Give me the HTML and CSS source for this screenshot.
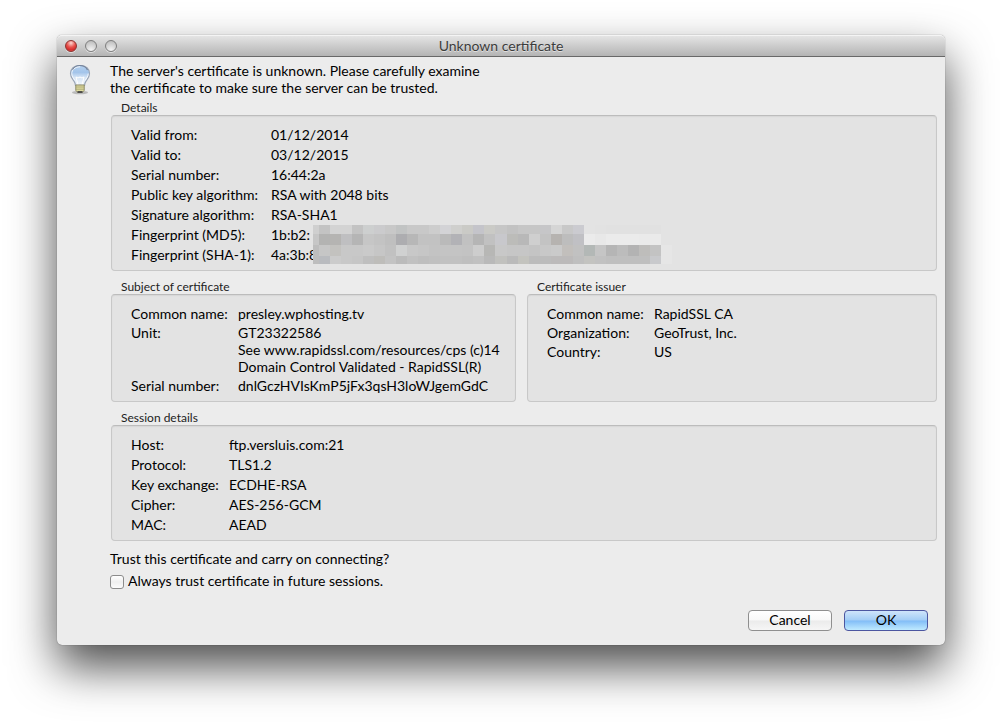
FILE: index.html
```html
<!DOCTYPE html>
<html lang="en">
<head>
<meta charset="utf-8">
<title>Unknown certificate</title>
<link rel="stylesheet" href="styles.css">
</head>
<body>
<main class="window">
  <header class="titlebar">
    <div class="lights">
      <button class="light light-close" type="button" aria-label="Close"></button>
      <button class="light" type="button" aria-label="Minimize"></button>
      <button class="light" type="button" aria-label="Zoom"></button>
    </div>
    <h1 class="title">Unknown certificate</h1>
  </header>
  <div class="body">
    <svg class="bulb" viewBox="0 0 24 32" aria-hidden="true">
      <defs>
        <linearGradient id="glass" x1="0" y1="0" x2="0" y2="1">
          <stop offset="0" stop-color="#b4d0ee"/>
          <stop offset="0.35" stop-color="#a3c4ea"/>
          <stop offset="0.6" stop-color="#d5e4f5"/>
          <stop offset="1" stop-color="#f3f7fb"/>
        </linearGradient>
      </defs>
      <ellipse cx="12" cy="29.500" rx="8" ry="1.800" fill="#888" opacity="0.5"/>
      <path d="M12 2.500C6 2.500 2.500 6 2.500 10.500c0 3.600 2 5.400 3.500 7.600 1 1.500 1.300 2.700 1.500 4.200h9c.2-1.500.5-2.700 1.500-4.200 1.500-2.200 3.500-4 3.500-7.600 0-4.500-3.500-8-9.500-8z" fill="url(#glass)" stroke="#9aa5b6" stroke-width="1.200"/>
      <path d="M4.500 7C6 4 8.500 2.500 12 2.500S18 4 19.500 7" fill="none" stroke="#75849c" stroke-width="1.200"/>
      <path d="M12 3.800c-5 0-8.200 3-8.200 6.800 0 3 1.600 4.600 3.200 7" fill="none" stroke="#fff" stroke-width="1" opacity="0.8"/>
      <path d="M20.200 10.600c0 3-1.600 4.600-3.200 7" fill="none" stroke="#fff" stroke-width="1" opacity="0.8"/>
      <path d="M8 14l2 8M16 14l-2 8M8 14l2 1 2-1 2 1 2-1" fill="none" stroke="#fff" stroke-width="1"/>
      <path d="M7.800 22h8.400v5.200c0 .8-1.400 2-2.400 2h-3.600c-1 0-2.400-1.200-2.400-2z" fill="#e0dda0" stroke="#8b8a66" stroke-width="1"/>
      <path d="M8 24h8M8 26.200h8" stroke="#a3a070" stroke-width="0.800"/>
      <path d="M9.500 29h5" stroke="#444" stroke-width="1.800"/>
    </svg>
    <div class="content">
      <p class="message">The server's certificate is unknown. Please carefully examine<br>the certificate to make sure the server can be trusted.</p>

      <section class="group">
        <h2 class="legend">Details</h2>
        <dl class="box fields fields-details">
          <dt>Valid from:</dt><dd>01/12/2014</dd>
          <dt>Valid to:</dt><dd>03/12/2015</dd>
          <dt>Serial number:</dt><dd>16:44:2a</dd>
          <dt>Public key algorithm:</dt><dd>RSA with 2048 bits</dd>
          <dt>Signature algorithm:</dt><dd>RSA-SHA1</dd>
          <dt>Fingerprint (MD5):</dt><dd class="masked">1b:b2:<svg class="mosaic" viewBox="0 0 359 39" shape-rendering="crispEdges" aria-hidden="true"></svg></dd>
          <dt>Fingerprint (SHA-1):</dt><dd>4a:3b:8</dd>
        </dl>
      </section>

      <div class="pair">
        <section class="group">
          <h2 class="legend">Subject of certificate</h2>
          <dl class="box fields fields-name">
            <dt>Common name:</dt><dd>presley.wphosting.tv</dd>
            <dt>Unit:</dt><dd>GT23322586<br>See www.rapidssl.com/resources/cps (c)14<br>Domain Control Validated - RapidSSL(R)</dd>
            <dt>Serial number:</dt><dd>dnlGczHVIsKmP5jFx3qsH3loWJgemGdC</dd>
          </dl>
        </section>
        <section class="group">
          <h2 class="legend">Certificate issuer</h2>
          <dl class="box fields fields-name">
            <dt>Common name:</dt><dd>RapidSSL CA</dd>
            <dt>Organization:</dt><dd>GeoTrust, Inc.</dd>
            <dt>Country:</dt><dd>US</dd>
          </dl>
        </section>
      </div>

      <section class="group">
        <h2 class="legend">Session details</h2>
        <dl class="box fields fields-session">
          <dt>Host:</dt><dd>ftp.versluis.com:21</dd>
          <dt>Protocol:</dt><dd>TLS1.2</dd>
          <dt>Key exchange:</dt><dd>ECDHE-RSA</dd>
          <dt>Cipher:</dt><dd>AES-256-GCM</dd>
          <dt>MAC:</dt><dd>AEAD</dd>
        </dl>
      </section>

      <p class="question">Trust this certificate and carry on connecting?</p>
      <div class="always">
        <input class="check" type="checkbox" id="always">
        <label for="always">Always trust certificate in future sessions.</label>
      </div>
      <div class="actions">
        <button class="btn" type="button">Cancel</button>
        <button class="btn btn-default" type="button">OK</button>
      </div>
    </div>
  </div>
</main>
<script src="mosaic.js"></script>
</body>
</html>
```
FILE: styles.css
```css
* { box-sizing: border-box; }
body {
  margin: 0;
  padding: 35px 57px 79px;
  background: #fff;
  color: #000;
  font: 14px/17px "Lucida Grande", Lato, "Noto Sans", sans-serif;
}
h1, h2, p, dl, dd { margin: 0; font-weight: normal; }
.window {
  border-radius: 5px;
  background: #ececec;
  box-shadow: 0 0 1px rgba(0, 0, 0, 0.6), 0 22px 46px rgba(0, 0, 0, 0.7);
}
.titlebar {
  display: grid;
  grid-template-columns: 1fr auto 1fr;
  align-items: center;
  height: 22px;
  padding: 0 8px;
  border-top: 1px solid #f4f4f4;
  border-bottom: 1px solid #686868;
  border-radius: 5px 5px 0 0;
  background: linear-gradient(#e4e4e4, #b4b4b4);
}
.lights { display: flex; gap: 8px; }
.light {
  width: 12px;
  height: 12px;
  padding: 0;
  border: 1px solid #7e7e7e;
  border-radius: 50%;
  background: radial-gradient(circle at 50% 90%, #f4f4f4, #cfcfcf 60%, #b4b4b4);
  box-shadow: 0 1px 0 rgba(255, 255, 255, 0.5);
}
.light-close {
  border-color: #8c3330;
  background: radial-gradient(circle at 50% 20%, #f9c9c4 5%, #e8534d 45%, #d42a2a 75%, #f58a80);
}
.title {
  padding-bottom: 2px;
  color: #3c3c3c;
  font-size: 14px;
  line-height: 17px;
  text-shadow: 0 1px 0 rgba(255, 255, 255, 0.5);
}
.body { display: flex; gap: 19px; padding: 5px 8px 14px 11px; }
.bulb { flex: none; width: 24px; height: 32px; margin-top: 1px; }
.content { flex: 1; min-width: 0; }
.message { margin: 0 0 4px -1px; }
.group + .pair, .pair + .group { margin-top: 8px; }
.legend {
  padding-left: 10px;
  color: #222;
  font-size: 12px;
  line-height: 15px;
}
.box {
  border: 1px solid #c8c8c8;
  border-top-color: #bcbcbc;
  border-radius: 4px;
  background: #e3e3e3;
  box-shadow: inset 0 1px 1px #d6d6d6;
  padding: 10px 8px 7px 19px;
}
.fields { display: grid; align-content: start; row-gap: 3px; }
.fields-details { grid-template-columns: 140px 1fr; }
.fields-name { grid-template-columns: 107px 1fr; row-gap: 2px; }
.fields-session { grid-template-columns: 98px 1fr; }
.fields dt, .fields dd { white-space: nowrap; }
.masked { position: relative; }
.mosaic { position: absolute; left: 42px; top: -1px; width: 359px; height: 39px; }
.pair { display: grid; grid-template-columns: 405fr 410fr; gap: 11px; }
.pair .group { display: flex; flex-direction: column; min-width: 0; }
.pair .box { flex: 1; }
.question { margin: 9px 0 6px -1px; }
.always { display: flex; align-items: center; gap: 4px; margin-left: -1px; }
.always label { padding-bottom: 1px; line-height: 16px; }
.check {
  appearance: none;
  width: 14px;
  height: 14px;
  margin: 0;
  border: 1px solid #8c8c8c;
  border-radius: 3px;
  background: linear-gradient(#fff, #efefef 50%, #fbfbfb);
}
.actions { display: flex; justify-content: flex-end; gap: 12px; margin-top: 20px; padding-right: 9px; }
.btn {
  width: 84px;
  height: 21px;
  padding: 0 0 2px;
  border: 1px solid #8f8f8f;
  border-radius: 4px;
  background: linear-gradient(#fff, #f8f8f8 48%, #ebebeb 52%, #f6f6f6);
  color: #000;
  font: inherit;
}
.btn-default {
  border-color: #4c56a0;
  background: linear-gradient(#cfe4fa, #a3cdf6 48%, #82bdf7 52%, #bfeaff);
}
```
FILE: mosaic.js
```js
const rows = [
  { y: 0, h: 9, shades: "cfcfcf c3c3c3 d3d3d3 d3d3d3 c3c3c3 cdcfcf cbcbcd c8c8c8 c1c3c3 c8c8c8 c8c8c8 cdcdcd d3d3d6 cfcfcd cacac6 c4c4ca cacac6 c6c6c6 c2c2c2 c6c6c6 c6c6c6 c6c6c8 d5d5d5 c8c8c8 cbcbd0 e3e3e3 e2e2e2 e1e1e1 e1e1e1 e1e1e1 e1e1e1 e1e1e1 e3e3e3" },
  { y: 9, h: 11, shades: "c6c6c6 b3b3b2 b5b4b2 bfbfc1 b5b5b5 c6c6c6 c3c3c3 bfbfbf adadb0 b7b7b7 c2c2c2 c2c2c2 bababa b2b2b6 c1c1c1 b5b5b5 c1c1c1 c8c8cc bcbcb9 b8b8b8 cfcfcf c3c3c3 b6b3b0 bdbdbd c0c0c4 ebebeb e8e8e8 ebebeb ebebeb ebebeb eaeaea eaeaea e3e3e3" },
  { y: 20, h: 11, shades: "bdbdbd c6c6c6 c3c2bf c8c8c8 c8c8c8 cacaca c6c6c6 c1c1c1 d0d1d1 c8c8c8 c6c6c6 c3c3c3 c4c4c4 c4c4c4 c3c3c3 cdcdcd b7b7b5 c8c8c8 c6c6c6 c6c6c6 c4c4c4 c8c8c8 cacaca c2bfbc c1c1c1 b3b8b6 c5c5c5 b5b5b5 bcbcbc b3b3b3 bebdbb c3c3c3 e6e6e6" },
  { y: 31, h: 8, shades: "bdbdbd b9bbbf cbcbcb c8c8c8 c6c6c6 bfbfbf bebdba c3c3c3 bbbbbb c1c1c1 bebebe c0c0c0 c1c1c1 c1c1c1 bfbfbf c1c1c1 b9b9b9 c1c1be bababa c3c3be bcbcbc bcbcbc bcbaba bcbaba bfbfbf c3c3c0 c1c1c1 bfbfbf bfbfbf bfbfbf bfbfbf c8c9cc e6e6e6" }
];
const edge = (i) => (i ? 11 * i - 5 + (i > 17 ? 1 : 0) : 0);
const mosaic = document.querySelector(".mosaic");
for (const { y, h, shades } of rows) {
  shades.split(" ").forEach((shade, i) => {
    const rect = document.createElementNS("http://www.w3.org/2000/svg", "rect");
    rect.setAttribute("x", edge(i));
    rect.setAttribute("y", y);
    rect.setAttribute("width", edge(i + 1) - edge(i));
    rect.setAttribute("height", h);
    rect.setAttribute("fill", "#" + shade);
    mosaic.append(rect);
  });
}
```
